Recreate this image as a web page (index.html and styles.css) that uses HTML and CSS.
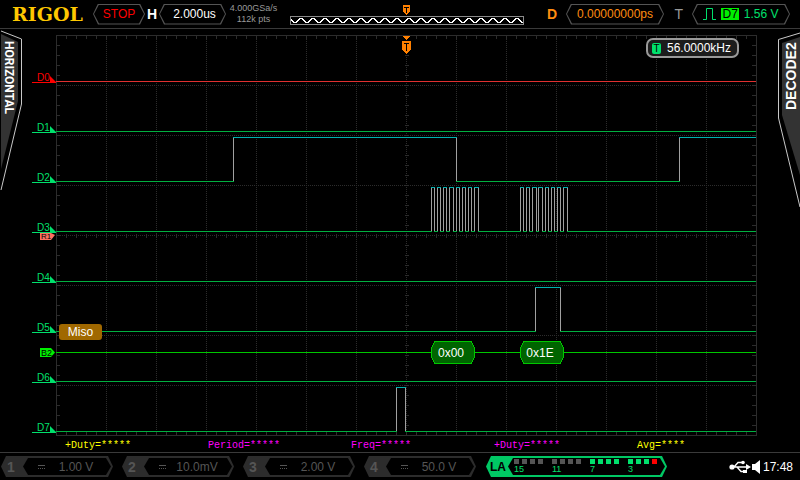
FILE: index.html
```html
<!DOCTYPE html>
<html lang="en">
<head>
    <meta charset="UTF-8">
    <meta name="viewport" content="width=device-width, initial-scale=1.0">
    <title>RIGOL - Logic Analyzer</title>
    <link rel="stylesheet" href="styles.css">
</head>
<body>
    <header class="top-bar">
        <div class="logo">RIGOL</div>
        <button class="pill run-state">STOP</button>
        <div class="letter">H</div>
        <button class="pill timebase">2.000us</button>
        <div class="sample-rate">
            <div>4.000GSa/s</div>
            <div>112k pts</div>
        </div>
        <svg class="preview" viewBox="0 0 234 28">
            <defs>
                <pattern id="wave" x="8" y="18" width="12" height="6" patternUnits="userSpaceOnUse">
                    <path d="M0 2.5L1 1.5L2 .5H4L5 1.5L6 2.5L7 3.5L8 4.5H10L11 3.5L12 2.5" fill="none" stroke="#fff"/>
                </pattern>
            </defs>
            <rect x=".5" y="16.5" width="233" height="8" fill="none" stroke="#8a8a8a"/>
            <rect x="1" y="18" width="232" height="6" fill="url(#wave)"/>
            <path d="M113 5h7v7l-3.5 3l-3.5-3z" fill="#ff8000"/>
            <path d="M114 7.5h5M116.5 7v6" stroke="#000"/>
        </svg>
        <div class="letter delay">D</div>
        <button class="pill offset">0.00000000ps</button>
        <div class="letter trig">T</div>
        <button class="pill trigger">
            <svg width="13" height="12" viewBox="0 0 13 12"><path d="M0 11.5h3.5v-11h6v11h3.5" fill="none" stroke="#00e06c"/></svg>
            <span class="source">D7</span>
            <span>1.56 V</span>
        </button>
    </header>

    <main class="scope">
        <button class="side-tab">
            <svg width="22" height="162" viewBox="0 0 22 162">
                <path d="M1 5L18 13V72L1 140z" fill="#333"/>
                <path d="M1 2L21.5 10V75L1 161" fill="none" stroke="#c8c8c8"/>
            </svg>
            <span class="tab-text">HORIZONTAL</span>
        </button>

        <div class="labels">
            <div class="label red">D0</div>
            <div class="label">D1</div>
            <div class="label">D2</div>
            <div class="label">D3</div>
            <div class="label">D4</div>
            <div class="label">D5</div>
            <div class="label">D6</div>
            <div class="label">D7</div>
            <svg class="marker ref" width="15" height="7" viewBox="0 0 15 7">
                <path d="M0 0h11l4 2l-4 5h-11z" fill="#ff7060"/>
                <text x="1" y="6" font-size="8">R1</text>
            </svg>
            <svg class="marker bus" width="15" height="9" viewBox="0 0 15 9">
                <path d="M0 0h11l4 4.5l-4 4.5h-11z" fill="#00f000"/>
                <text x="1" y="8" font-size="9">B2</text>
            </svg>
        </div>

        <div class="plot">
            <svg class="screen" viewBox="0 0 701 401">
                <!-- graticule -->
                <g class="grid">
                    <path class="dots" d="M0 50.5h700M0 100.5h700M0 150.5h700M0 200.5h700M0 250.5h700M0 300.5h700M0 350.5h700"/>
                    <path class="dots" d="M50.5 0v400M100.5 0v400M150.5 0v400M200.5 0v400M250.5 0v400M300.5 0v400M350.5 0v400M400.5 0v400M450.5 0v400M500.5 0v400M550.5 0v400M600.5 0v400M650.5 0v400"/>
                    <path class="ticks" d="M0 2h700M0 398h700M0 200.5h700M2 0v400M698 0v400M350.5 0v400"/>
                    <rect x=".5" y=".5" width="700" height="400"/>
                </g>
                <!-- edges -->
                <g class="edge">
                    <path d="M177.5 102v45M400.5 102v45M623.5 102v45"/>
                    <path d="M375.5 152v45M378.5 152v45M381.5 152v45M384.5 152v45M387.5 152v45M390.5 152v45M393.5 152v45M397.5 152v45M400.5 152v45M403.5 152v45M406.5 152v45M409.5 152v45M412.5 152v45M415.5 152v45M418.5 152v45M422.5 152v45"/>
                    <path d="M464.5 152v45M467.5 152v45M470.5 152v45M473.5 152v45M476.5 152v45M480.5 152v45M482.5 152v45M486.5 152v45M489.5 152v45M492.5 152v45M495.5 152v45M498.5 152v45M501.5 152v45M504.5 152v45M507.5 152v45M511.5 152v45"/>
                    <path d="M479.5 252v45M504.5 252v45M340.5 352v45M349.5 352v45"/>
                </g>
                <!-- low levels -->
                <path class="d0" d="M0 46.5h700"/>
                <g class="low">
                    <path d="M0 96.5h700"/>
                    <path d="M0 146.5h178M400 146.5h224"/>
                    <path d="M0 196.5h376M378 196.5h4M384 196.5h4M390 196.5h4M397 196.5h4M403 196.5h4M409 196.5h4M415 196.5h4M422 196.5h43M467 196.5h4M473 196.5h4M480 196.5h3M486 196.5h4M492 196.5h4M498 196.5h4M504 196.5h4M511 196.5h189"/>
                    <path d="M0 246.5h700"/>
                    <path d="M0 296.5h480M504 296.5h196"/>
                    <path d="M0 346.5h700"/>
                    <path d="M0 396.5h341M349 396.5h351"/>
                </g>
                <!-- high levels -->
                <g class="high">
                    <path d="M177 102.5h224M623 102.5h77"/>
                    <path d="M375 152.5h4M381 152.5h4M387 152.5h4M393 152.5h5M400 152.5h4M406 152.5h4M412 152.5h4M418 152.5h5"/>
                    <path d="M464 152.5h4M470 152.5h4M476 152.5h5M482 152.5h5M489 152.5h4M495 152.5h4M501 152.5h4M507 152.5h5"/>
                    <path d="M479 252.5h26M340 352.5h10"/>
                </g>
                <!-- decoded bus -->
                <path class="bus-line" d="M0 317.5h700"/>
                <g class="packet">
                    <path d="M378.5 306.5h37l3 7v8l-3 7h-37l-3-7v-8z"/>
                    <text x="395" y="322">0x00</text>
                    <path d="M467.5 306.5h37l3 7v8l-3 7h-37l-3-7v-8z"/>
                    <text x="484" y="322">0x1E</text>
                </g>
                <!-- trigger position -->
                <path d="M346 1h9l-4.5 4zM346 6h9v9l-4.5 4l-4.5-4z" fill="#ff8000"/>
                <path d="M348 8.5h5M350.5 8v8" stroke="#000"/>
            </svg>
            <div class="frequency"><span class="freq-icon">T</span>56.0000kHz</div>
            <div class="bus-name">Miso</div>
        </div>

        <button class="side-tab right">
            <svg width="22" height="180" viewBox="0 0 22 180">
                <path d="M22 8L4 14V86L22 146z" fill="#333"/>
                <path d="M22 4L.5 10.5V89L22 178" fill="none" stroke="#c8c8c8"/>
            </svg>
            <span class="tab-text">DECODE2</span>
        </button>
    </main>

    <section class="measures">
        <div class="yellow">+Duty=*****</div>
        <div>Period=*****</div>
        <div>Freq=*****</div>
        <div>+Duty=*****</div>
        <div class="yellow">Avg=****</div>
    </section>

    <footer class="bottom-bar">
        <button class="channel"><b>1</b><span class="coupling"></span><span class="scale">1.00 V</span></button>
        <button class="channel"><b>2</b><span class="coupling"></span><span class="scale">10.0mV</span></button>
        <button class="channel"><b>3</b><span class="coupling"></span><span class="scale">2.00 V</span></button>
        <button class="channel"><b>4</b><span class="coupling"></span><span class="scale">50.0 V</span></button>
        <button class="channel la">
            <b>LA</b>
            <span class="bits"><i></i><i></i><i></i><i></i><em>15</em></span>
            <span class="bits"><i></i><i></i><i></i><i></i><em>11</em></span>
            <span class="bits on"><i></i><i></i><i></i><i></i><em>7</em></span>
            <span class="bits on"><i></i><i></i><i></i><i class="current"></i><em>3</em></span>
        </button>
        <div class="status">
            <svg width="32" height="16" viewBox="0 0 32 16">
                <path d="M3 8h16M5 8l4-4.5h4M8 8l4 4.5h3" fill="none" stroke="#fff" stroke-width="1.4"/>
                <circle cx="3" cy="8" r="2.6" fill="#fff"/>
                <path d="M17 5l5 3l-5 3zM14 11h4v3h-4z" fill="#fff"/>
                <circle cx="14" cy="3.5" r="1.8" fill="#fff"/>
                <path d="M23 5h3l5-4v14l-5-4h-3z" fill="#fff"/>
            </svg>
            <time>17:48</time>
        </div>
    </footer>
</body>
</html>
```
FILE: styles.css
```css
:root {
    --green: #00e06c;
    --orange: #ff8c10;
    --line: #3a3a3a;
    --hex: polygon(5px 0, calc(100% - 5px) 0, 100% 50%, calc(100% - 5px) 100%, 5px 100%, 0 50%);
}

* {
    box-sizing: border-box;
    margin: 0;
    padding: 0;
}

body {
    min-height: 100vh;
    display: flex;
    flex-direction: column;
    background: #000;
    color: #fff;
    font: 12px/14px "Liberation Sans", Arial, sans-serif;
}

button {
    border: none;
    background: none;
    color: inherit;
    font: inherit;
    cursor: pointer;
}

/* top bar */
.top-bar {
    display: grid;
    grid-template-columns: 81px 52px 14px 67px 64px 1fr 42px 98px 28px 98px;
    align-items: center;
    height: 29px;
    padding: 0 10px 0 12px;
    border-bottom: 1px solid var(--line);
}

.logo {
    color: #ffc800;
    font: bold 19px/28px "DejaVu Serif", serif;
}

.pill {
    position: relative;
    z-index: 0;
    display: flex;
    align-items: center;
    justify-content: center;
    height: 21px;
    background: #555;
    clip-path: var(--hex);
}

.pill::before {
    content: "";
    position: absolute;
    inset: 1px;
    z-index: -1;
    background: #000;
    clip-path: var(--hex);
}

.run-state {
    color: #f00;
}

.timebase {
    padding-left: 4px;
}

.offset {
    color: var(--orange);
}

.trigger {
    gap: 5px;
    color: var(--green);
}

.source {
    padding: 0 1px;
    background: #00f000;
    color: #000;
    line-height: 12px;
}

.letter {
    text-align: center;
    font-size: 14px;
    font-weight: bold;
}

.delay,
.trig {
    padding-right: 9px;
    text-align: right;
    color: var(--orange);
}

.trig {
    color: #999;
    font-weight: normal;
}

.sample-rate {
    padding-right: 9px;
    text-align: center;
    color: #999;
    font-size: 9px;
    line-height: 11px;
}

.preview {
    width: 100%;
    height: 28px;
    shape-rendering: crispEdges;
}

/* main screen */
.scope {
    display: grid;
    grid-template-columns: 22px 34px 1fr 43px;
    align-items: start;
}

.side-tab {
    display: grid;
    width: 22px;
    text-align: start;
}

.side-tab > * {
    grid-area: 1 / 1;
}

.side-tab.right {
    justify-self: end;
}

.tab-text {
    writing-mode: vertical-rl;
    padding: 12px 6px 0 2px;
    font: bold 12px/14px Roboto, sans-serif;
}

.right .tab-text {
    padding: 99px 6px 0 2px;
    transform: rotate(180deg);
    font: bold 14px/14px "Liberation Sans", Arial, sans-serif;
}

.labels {
    position: relative;
    padding: 4px 0 0 10px;
}

.label {
    position: relative;
    display: flex;
    align-items: flex-end;
    height: 50px;
    padding-left: 5px;
    border-bottom: 1px solid;
    color: var(--green);
    font-size: 10px;
    line-height: 9px;
}

.label::after {
    content: "";
    position: absolute;
    right: 0;
    bottom: 0;
    width: 6px;
    height: 6px;
    background: currentColor;
    clip-path: polygon(0 0, 100% 100%, 0 100%);
}

.label.red {
    color: #f00;
}

.marker {
    position: absolute;
    left: 18px;
    overflow: visible;
}

.marker.ref {
    top: 204px;
}

.marker.bus {
    top: 319px;
}

.plot {
    position: relative;
    padding-top: 6px;
}

.screen {
    display: block;
    width: 100%;
    overflow: visible;
    fill: none;
    shape-rendering: crispEdges;
}

.grid {
    stroke: #2c2c2c;
}

.dots {
    stroke-dasharray: 1 1;
}

.ticks {
    stroke-width: 4px;
    stroke-dasharray: 1 9;
}

.d0 {
    stroke: #e03030;
}

.low {
    stroke: #00b040;
}

.high {
    stroke: #00b0b0;
}

.edge {
    stroke: #a0a0a0;
}

.bus-line {
    stroke: #00c800;
}

.packet path {
    fill: #006400;
    stroke: #00c800;
}

.packet text {
    fill: #fff;
    text-anchor: middle;
}

.frequency,
.bus-name {
    position: absolute;
    display: flex;
    align-items: center;
    justify-content: center;
}

.frequency {
    top: 9px;
    right: 18px;
    gap: 6px;
    height: 20px;
    padding: 0 6px 0 4px;
    border: 2px solid #999;
    border-radius: 7px;
    background: #1c1c1c;
}

.freq-icon {
    width: 9px;
    border-radius: 2px;
    background: var(--green);
    color: #000;
    text-align: center;
    font-size: 10px;
    line-height: 11px;
}

.bus-name {
    top: 295px;
    left: 3px;
    width: 43px;
    height: 16px;
    border-radius: 3px;
    background: #a06800;
}

/* measurements */
.measures {
    display: grid;
    grid-template-columns: repeat(5, 1fr);
    padding: 3px 20px 0 65px;
    color: #f0f;
    font: 10px/13px "Liberation Mono", monospace;
}

.yellow {
    color: #ff0;
}

/* bottom bar */
.bottom-bar {
    display: flex;
    align-items: center;
    gap: 9px;
    flex: 1;
    padding: 0 7px 0 1px;
    border-top: 1px solid var(--line);
}

.channel {
    position: relative;
    z-index: 0;
    display: flex;
    align-items: center;
    width: 112px;
    height: 21px;
    background: #2c2c2c;
    color: #555;
    clip-path: var(--hex);
}

.channel::before {
    content: "";
    position: absolute;
    inset: 2px 2px 2px 22px;
    z-index: -1;
    background: #000;
    clip-path: var(--hex);
}

.channel b {
    width: 20px;
    text-align: center;
    font-size: 14px;
}

.coupling {
    width: 7px;
    height: 4px;
    margin-left: 17px;
    border-top: 1px solid;
    border-bottom: 1px dotted;
}

.scale {
    flex: 1;
    padding-right: 6px;
    text-align: center;
}

.channel.la {
    gap: 9px;
    width: 181px;
    margin-left: 1px;
    background: #00c864;
}

.la b {
    width: 19px;
    padding-left: 4px;
    color: #000;
    font-size: 12px;
}

.bits {
    display: grid;
    grid-template-columns: repeat(4, 5px);
    gap: 1px 3px;
    color: var(--green);
}

.bits i {
    height: 5px;
    background: #555;
}

.bits.on i {
    background: var(--green);
}

.bits.on .current {
    background: #f00;
}

.bits em {
    grid-column: 1 / -1;
    text-align: left;
    font-size: 9px;
    font-style: normal;
    line-height: 9px;
}

.status {
    display: flex;
    align-items: center;
    gap: 2px;
    margin-left: auto;
}
```
